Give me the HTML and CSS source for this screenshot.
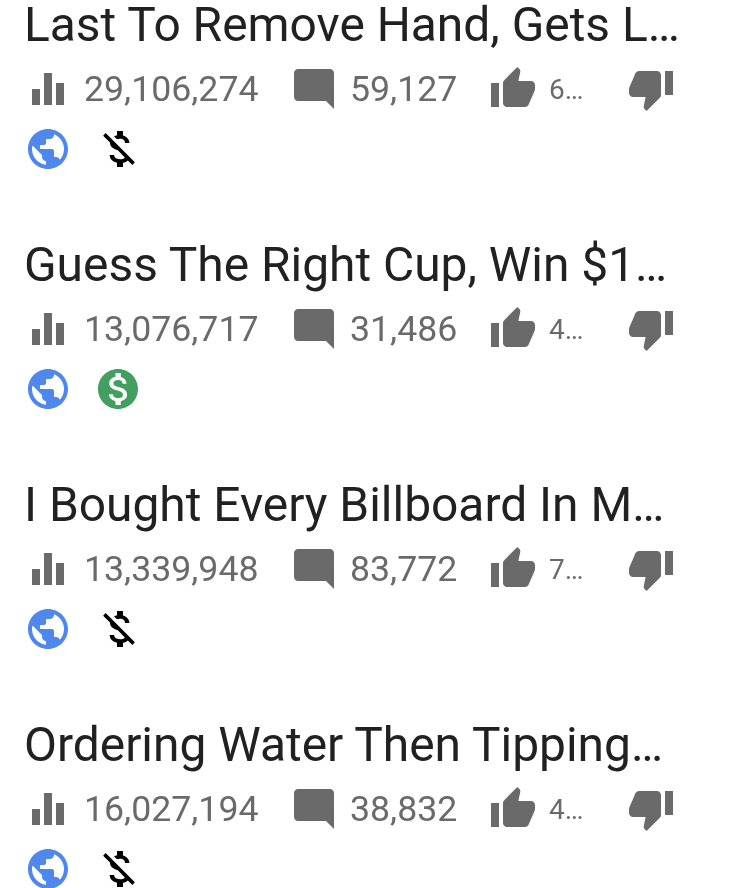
FILE: index.html
```html
<!DOCTYPE html>
<html lang="en">
<head>
  <meta charset="UTF-8">
  <meta name="viewport" content="width=device-width, initial-scale=1.0">
  <title>Video List</title>
  <link rel="stylesheet" href="styles.css">
</head>
<body>
  <svg class="icon-defs" aria-hidden="true">
    <symbol id="i-views" viewBox="0 0 24 24"><path d="M10 20h4V4h-4v16zm-6 0h4v-8H4v8zM16 9v11h4V9h-4z"/></symbol>
    <symbol id="i-comment" viewBox="0 0 24 24"><path d="M21.99 4c0-1.1-.89-2-1.99-2H4c-1.1 0-2 .9-2 2v12c0 1.1.9 2 2 2h14l4 4-.01-18z"/></symbol>
    <symbol id="i-up" viewBox="0 0 24 24"><path d="M1 21h4V9H1v12zm22-11c0-1.1-.9-2-2-2h-6.31l.95-4.57.03-.32c0-.41-.17-.79-.44-1.06L14.17 1 7.59 7.59C7.22 7.95 7 8.45 7 9v10c0 1.1.9 2 2 2h9c.83 0 1.54-.5 1.84-1.22l3.02-7.05c.09-.23.14-.47.14-.73v-2z"/></symbol>
    <symbol id="i-down" viewBox="0 0 24 24"><path d="M15 3H6c-.83 0-1.54.5-1.84 1.22l-3.02 7.05c-.09.23-.14.47-.14.73v2c0 1.1.9 2 2 2h6.31l-.95 4.57-.03.32c0 .41.17.79.44 1.06L9.83 23l6.59-6.59c.36-.36.58-.86.58-1.41V5c0-1.1-.9-2-2-2zm4 0v12h4V3h-4z"/></symbol>
    <symbol id="i-public" viewBox="0 0 24 24"><path d="M12 2C6.48 2 2 6.48 2 12s4.48 10 10 10 10-4.48 10-10S17.52 2 12 2zm-1 17.93c-3.95-.49-7-3.85-7-7.93 0-.62.08-1.21.21-1.79L9 15v1c0 1.1.9 2 2 2v1.93zm6.9-2.54c-.26-.81-1-1.39-1.9-1.39h-1v-3c0-.55-.45-1-1-1H8v-2h2c.55 0 1-.45 1-1V7h2c1.1 0 2-.9 2-2v-.41c2.93 1.19 5 4.06 5 7.41 0 2.08-.8 3.97-2.1 5.39z"/></symbol>
    <symbol id="i-money" viewBox="0 0 24 24"><path d="M12 2C6.48 2 2 6.48 2 12s4.48 10 10 10 10-4.48 10-10S17.52 2 12 2zm1.41 16.09V20h-2.67v-1.93c-1.71-.36-3.16-1.46-3.27-3.4h1.96c.1 1.05.82 1.87 2.65 1.87 1.96 0 2.4-.98 2.4-1.59 0-.83-.44-1.61-2.67-2.14-2.48-.6-4.18-1.62-4.18-3.67 0-1.72 1.39-2.84 3.11-3.21V4h2.67v1.95c1.86.45 2.79 1.86 2.85 3.39H14.3c-.05-1.11-.64-1.87-2.22-1.87-1.5 0-2.4.68-2.4 1.64 0 .84.65 1.39 2.67 1.91s4.18 1.39 4.18 3.91c-.01 1.83-1.38 2.83-3.12 3.16z"/></symbol>
    <symbol id="i-money-off" viewBox="0 0 24 24"><path d="M12.5 6.9c1.78 0 2.44.85 2.5 2.1h2.21c-.07-1.72-1.12-3.3-3.21-3.81V3h-3v2.16c-.53.12-1.03.3-1.48.54l1.47 1.47c.41-.17.91-.27 1.51-.27zM5.33 4.06L4.06 5.33 7.5 8.77c0 2.08 1.56 3.21 3.91 3.91l3.51 3.51c-.34.48-1.05.91-2.42.91-2.06 0-2.87-.92-2.98-2.1h-2.2c.12 2.19 1.76 3.42 3.68 3.83V21h3v-2.15c.96-.18 1.82-.55 2.45-1.12l2.22 2.22 1.27-1.27L5.33 4.06z"/></symbol>
  </svg>

  <div class="video-list">

    <section class="video-row">
      <h2 class="video-title">Last To Remove Hand, Gets L…</h2>
      <div class="stats">
        <div class="stat stat-views"><svg class="icon"><use href="#i-views"/></svg><span>29,106,274</span></div>
        <div class="stat stat-comments"><svg class="icon"><use href="#i-comment"/></svg><span>59,127</span></div>
        <div class="stat stat-likes"><svg class="icon"><use href="#i-up"/></svg><span>6…</span></div>
        <div class="stat"><svg class="icon"><use href="#i-down"/></svg></div>
      </div>
      <div class="badges">
        <svg class="icon icon-public"><use href="#i-public"/></svg>
        <svg class="icon icon-off"><use href="#i-money-off"/></svg>
      </div>
    </section>

    <section class="video-row">
      <h2 class="video-title">Guess The Right Cup, Win $1…</h2>
      <div class="stats">
        <div class="stat stat-views"><svg class="icon"><use href="#i-views"/></svg><span>13,076,717</span></div>
        <div class="stat stat-comments"><svg class="icon"><use href="#i-comment"/></svg><span>31,486</span></div>
        <div class="stat stat-likes"><svg class="icon"><use href="#i-up"/></svg><span>4…</span></div>
        <div class="stat"><svg class="icon"><use href="#i-down"/></svg></div>
      </div>
      <div class="badges">
        <svg class="icon icon-public"><use href="#i-public"/></svg>
        <svg class="icon icon-money"><use href="#i-money"/></svg>
      </div>
    </section>

    <section class="video-row">
      <h2 class="video-title">I Bought Every Billboard In M…</h2>
      <div class="stats">
        <div class="stat stat-views"><svg class="icon"><use href="#i-views"/></svg><span>13,339,948</span></div>
        <div class="stat stat-comments"><svg class="icon"><use href="#i-comment"/></svg><span>83,772</span></div>
        <div class="stat stat-likes"><svg class="icon"><use href="#i-up"/></svg><span>7…</span></div>
        <div class="stat"><svg class="icon"><use href="#i-down"/></svg></div>
      </div>
      <div class="badges">
        <svg class="icon icon-public"><use href="#i-public"/></svg>
        <svg class="icon icon-off"><use href="#i-money-off"/></svg>
      </div>
    </section>

    <section class="video-row">
      <h2 class="video-title">Ordering Water Then Tipping…</h2>
      <div class="stats">
        <div class="stat stat-views"><svg class="icon"><use href="#i-views"/></svg><span>16,027,194</span></div>
        <div class="stat stat-comments"><svg class="icon"><use href="#i-comment"/></svg><span>38,832</span></div>
        <div class="stat stat-likes"><svg class="icon"><use href="#i-up"/></svg><span>4…</span></div>
        <div class="stat"><svg class="icon"><use href="#i-down"/></svg></div>
      </div>
      <div class="badges">
        <svg class="icon icon-public"><use href="#i-public"/></svg>
        <svg class="icon icon-off"><use href="#i-money-off"/></svg>
      </div>
    </section>

  </div>
</body>
</html>
```

FILE: styles.css
```css
html, body {
  margin: 0;
  height: 100%;
  overflow: hidden;
  background-color: #fff;
}

.icon-defs {
  display: none;
}

.video-list {
  font-family: Roboto, sans-serif;
  padding-left: 24px;
  will-change: opacity;
}

.video-row {
  height: 240px;
}

.video-title {
  margin: 0;
  height: 47px;
  padding-top: 1px;
  line-height: 48px;
  font-size: 47.9px;
  font-weight: 400;
  color: #212121;
  white-space: nowrap;
}

.stats {
  display: flex;
  margin-top: 17px;
  height: 48px;
  color: #6a6a6a;
}

.stat {
  display: flex;
  align-items: center;
  gap: 12px;
  font-size: 35.7px;
}

.stat-views {
  width: 266px;
}

.stat-comments {
  width: 199px;
}

.stat-likes {
  width: 138px;
  font-size: 28px;
}

.icon {
  width: 48px;
  height: 48px;
  flex: none;
  fill: currentColor;
}

.badges {
  display: flex;
  gap: 22px;
  margin-top: 12px;
}

.icon-public {
  color: #5087ec;
}

.icon-money {
  color: #439f5f;
}

.icon-off {
  color: #000;
  margin-left: 1px;
}
```
